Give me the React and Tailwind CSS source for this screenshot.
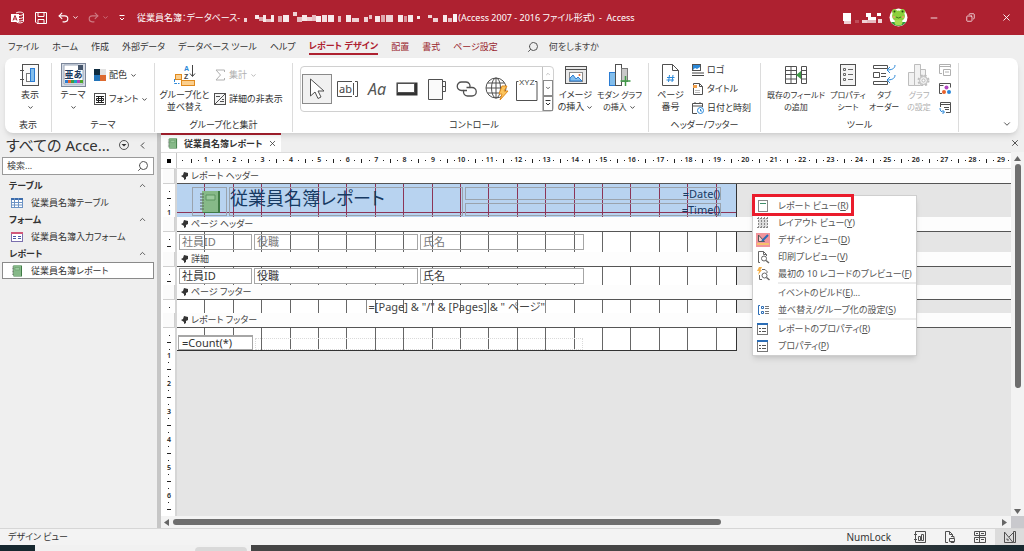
import React, { useState } from 'react';
import { ChevronDown, ChevronUp, ChevronLeft, Search, X, Minus, Copy, Undo2, Redo2 } from 'lucide-react';

const CM = 28.4;

const tabs = [
  { label: 'ファイル' },
  { label: 'ホーム' },
  { label: '作成' },
  { label: '外部データ' },
  { label: 'データベース ツール' },
  { label: 'ヘルプ' },
  { label: 'レポート デザイン', active: true },
  { label: '配置', contextual: true },
  { label: '書式', contextual: true },
  { label: 'ページ設定', contextual: true },
];

const navGroups = [
  { title: 'テーブル', items: [{ label: '従業員名簿テーブル', icon: 'table' }] },
  { title: 'フォーム', items: [{ label: '従業員名簿入力フォーム', icon: 'form' }] },
  { title: 'レポート', items: [{ label: '従業員名簿レポート', icon: 'report' }] },
];

const menuItems = [
  { label: 'レポート ビュー', mnemonic: 'R', icon: 'reportView' },
  { label: 'レイアウト ビュー', mnemonic: 'Y', icon: 'layout' },
  { label: 'デザイン ビュー', mnemonic: 'D', icon: 'design' },
  { label: '印刷プレビュー', mnemonic: 'V', icon: 'preview' },
  { label: '最初の 10 レコードのプレビュー', mnemonic: 'F', icon: 'quick' },
  { separator: true },
  { label: 'イベントのビルド', mnemonic: 'E', tail: '...' },
  { label: '並べ替え/グループ化の設定', mnemonic: 'S', icon: 'sort' },
  { separator: true },
  { label: 'レポートのプロパティ', mnemonic: 'R', icon: 'props' },
  { label: 'プロパティ', mnemonic: 'P', icon: 'props' },
];

/* ---------- Icons ---------- */

const Svg = ({ w, h, children, stroke = '#505050' }) => (
  <svg width={w} height={h} viewBox={`0 0 ${w} ${h}`} fill="none" stroke={stroke} className="block shrink-0">
    {children}
  </svg>
);

const ReportViewIcon = () => (
  <Svg w={20} h={22}>
    <rect x="2.5" y="0.5" width="16" height="21" fill="#fafafa" />
    <path d="M0 6.5h4M0 15.5h4" />
    <rect x="6.5" y="9.5" width="4" height="8" fill="#fff" stroke="#777" />
    <rect x="10.5" y="4.5" width="4" height="13" fill="#83beec" stroke="#2b7cd3" />
  </Svg>
);

const ThemeIcon = () => (
  <svg width="25" height="24" viewBox="0 0 25 24" className="block">
    <rect x="0.5" y="0.5" width="24" height="23" fill="#d5dbe5" stroke="#7c879a" />
    <path d="M3 2h14l5 5v14H3z" fill="#fff" stroke="#9aa6b8" />
    <path d="M17 2v5h5V2z" fill="#44546a" />
    <text x="12.5" y="15" fontSize="9" fontWeight="700" textAnchor="middle" fill="#1c3a5e">亜あ</text>
    <rect x="4" y="17" width="3" height="3" fill="#2b7cd3" />
    <rect x="7" y="17" width="3" height="3" fill="#e8622c" />
    <rect x="10" y="17" width="3" height="3" fill="#3f9b46" />
    <rect x="13" y="17" width="3" height="3" fill="#1aa5c8" />
    <rect x="16" y="17" width="3" height="3" fill="#b146c2" />
    <rect x="19" y="17" width="3" height="3" fill="#4ea72e" />
  </svg>
);

const ColorsIcon = () => (
  <Svg w={12} h={12} stroke="none">
    <rect width="6" height="6" fill="#0f2c40" />
    <rect x="6" width="6" height="6" fill="#e2e2e2" />
    <rect y="6" width="6" height="6" fill="#2173b8" />
    <rect x="6" y="6" width="6" height="6" fill="#dd6a30" />
  </Svg>
);

const FontsIcon = () => (
  <Svg w={12} h={12}>
    <rect x="0.5" y="0.5" width="11" height="11" fill="#fff" />
    <path d="M2 3.5h8M2 9.5h8M4.5 3.5v6M7.5 3.5v6M2.5 5.5h7v2h-7z" stroke="#222" />
  </Svg>
);

const GroupSortIcon = () => (
  <Svg w={22} h={22}>
    <g className="font-['Liberation_Sans',sans-serif]" fontSize="7" fontWeight="700" stroke="none">
      <text x="10" y="7" fill="#2b88d8">A</text>
      <text x="10" y="15" fill="#444">Z</text>
    </g>
    <path d="M18.5 1v11M16 9.5l2.500 3 2.500-3" stroke="#444" />
    <rect x="1.5" y="10.5" width="6" height="5" fill="#fbcf8e" stroke="#e08a1e" />
    <rect x="7.5" y="16.5" width="13" height="5" fill="#fbcf8e" stroke="#e08a1e" />
    <path d="M0.5 15v4.500h5" stroke="#2b88d8" strokeDasharray="3 1" />
  </Svg>
);

const SigmaIcon = () => (
  <Svg w={12} h={12} stroke="#b0b0b0">
    <path d="M10.5 3V1H2l4.500 5L2 11h8.500V9" />
  </Svg>
);

const HideDetailIcon = () => (
  <Svg w={12} h={12}>
    <rect x="0.5" y="0.5" width="11" height="11" fill="#f4f4f4" />
    <path d="M1 11L11 1M6 8.5h4M8 6.5h2M2 3.5h4" />
  </Svg>
);

const PointerIcon = () => (
  <Svg w={20} h={24}>
    <path d="M3.5 2v17l4.500-4 3 6.500 3-1.500-3-6h6z" fill="#fff" />
  </Svg>
);

const TextBoxIcon = () => (
  <Svg w={21} h={16}>
    <path d="M15 0.5H0.5v15H15M18 0.5h2.500v15H18" />
    <text x="2" y="12" fontSize="11" fill="#444" stroke="none">ab</text>
    <path d="M16.5 2v12" />
  </Svg>
);

const ButtonIcon = () => (
  <Svg w={22} h={14}>
    <rect x="1" y="1" width="20" height="12" fill="#333" stroke="#333" />
    <rect x="1.5" y="1.5" width="17" height="9" fill="#fff" />
  </Svg>
);

const TabControlIcon = () => (
  <Svg w={18} h={21}>
    <path d="M0.5 0.5h14v20H0.5zM14.5 2.5h3v5h-3M14.5 7.5h3v5h-3" fill="#fafafa" />
  </Svg>
);

const LinkIcon = () => (
  <Svg w={22} h={16}>
    <path d="M11 9.5H5.5a4 4 0 0 1 0-8.500H10a4 4 0 0 1 3.500 6" strokeWidth="1.3" />
    <path d="M10.5 6.5H16a4 4 0 0 1 0 8.500h-4.500a4 4 0 0 1-3.500-6" strokeWidth="1.3" />
  </Svg>
);

const GlobeIcon = () => (
  <Svg w={24} h={24}>
    <circle cx="11" cy="11" r="10" />
    <ellipse cx="11" cy="11" rx="4.5" ry="10" />
    <path d="M1 11h20M2.5 6h17M2.5 16h17M11 1v20" />
    <path d="M17 9h5l-3 5h4l-8 9 2-6h-3z" fill="#fbc45c" stroke="#e08a1e" />
  </Svg>
);

const OptionGroupIcon = () => (
  <Svg w={22} h={24}>
    <path d="M2.500 4.500H0.500v19h20.500v-19h-2" />
    <text x="3" y="8" fontSize="8" fill="#444" stroke="none" className="font-['Liberation_Sans',sans-serif]">XYZ</text>
  </Svg>
);

const ImageIcon = () => (
  <Svg w={22} h={18}>
    <rect x="0.5" y="0.5" width="21" height="17" fill="#e9e9e9" />
    <path d="M1 3.5h20" />
    <rect x="4.5" y="6.5" width="13" height="9" fill="#fff" stroke="#8a8a8a" />
    <path d="M5 15v-3l3-3 3 4 2-2 4 4z" fill="#83beec" stroke="#2b7cd3" />
    <circle cx="14.5" cy="9" r="1" fill="#e8622c" stroke="none" />
  </Svg>
);

const ChartIcon = () => (
  <Svg w={22} h={22}>
    <rect x="0.5" y="8.5" width="6" height="13" fill="#83beec" stroke="#2b7cd3" />
    <rect x="6.5" y="0.5" width="6" height="21" fill="#fff" />
    <rect x="12.5" y="4.5" width="6" height="13" fill="#c8c8c8" stroke="#777" />
    <path d="M16.5 12v10M11.5 17h10" stroke="#3f9b46" strokeWidth="1.5" />
  </Svg>
);

const PageNumberIcon = () => (
  <Svg w={17} h={22}>
    <path d="M0.5 0.5h10l6 6v15h-16zM10.5 0.5v6h6" fill="#fff" />
    <path d="M7.5 11l-1 7M11 11l-1 7M5 13.5h7.500M4.5 16h7.500" stroke="#2b88d8" />
  </Svg>
);

const LogoIcon = () => (
  <Svg w={12} h={12}>
    <rect x="0.5" y="0.5" width="8" height="6" fill="#2b88d8" />
    <path d="M1 6l2-2 2 1 3-2v3z" fill="#fff" stroke="none" />
    <path d="M0 9h12M0 11.5h12" stroke="#444" />
  </Svg>
);

const TitleIcon = () => (
  <Svg w={12} h={12}>
    <path d="M1.5 0.5h6l3 3v8h-9zM7.5 0.5v3h3" fill="#fff" />
    <rect x="1" y="2" width="4" height="3" fill="#f2a04a" stroke="none" />
    <path d="M3 7.5h5M3 9.5h5" stroke="#bbb" />
  </Svg>
);

const DateTimeIcon = () => (
  <Svg w={12} h={12}>
    <path d="M5 11.5H0.5v-10h10V5M0.5 4h10M3 0v2M8 0v2" />
    <circle cx="8.5" cy="8.5" r="3" fill="#fff" stroke="#2b88d8" />
    <path d="M8.5 7v2H10" stroke="#2b88d8" />
  </Svg>
);

const FieldsIcon = () => (
  <Svg w={22} h={18}>
    <path d="M0.5 0.5h11v17H0.5zM0.5 4.5h11M0.5 8.5h11M0.5 13h11M6 0.5v17M16.5 0.5h5v17h-5zM16.5 4.5h5M16.5 8.5h5M16.5 13h5" />
    <path d="M11 9l5-4v8z" fill="#3f9b46" stroke="none" />
  </Svg>
);

const PropertySheetIcon = () => (
  <Svg w={16} h={22}>
    <rect x="0.5" y="0.5" width="15" height="21" fill="#f4f4f4" />
    <path d="M3.5 4.5h2v2h-2zM3.5 9.5h2v2h-2zM3.5 14.5h2v2h-2zM8 5.5h5M8 10.5h5M8 15.5h5" stroke="#666" />
  </Svg>
);

const TabOrderIcon = () => (
  <Svg w={23} h={22}>
    <path d="M0.500 1.500h14v3h-14zM0.500 8.500h6v5h-6zM0.500 17.500h14v3h-14zM8 9.500h5M8 12.500h5" />
    <path d="M22 1c0 4-4 5-8 5M17 3l-3 3 3 3M22 11c0 4-4 5-8 5M17 13l-3 3 3 3" stroke="#2b88d8" />
  </Svg>
);

const ChartSettingsIcon = () => (
  <Svg w={22} h={22} stroke="#bdbdbd">
    <path d="M0.5 8.5h6v13h-6zM6.5 0.5h6v21h-6zM12.5 5.5h5v6h-5z" fill="#f2f2f2" />
    <circle cx="15.5" cy="16.5" r="5" fill="#eee" strokeWidth="2" strokeDasharray="2 2" />
    <circle cx="15.5" cy="16.5" r="4" fill="#eee" />
    <circle cx="15.5" cy="16.5" r="1.5" fill="#fff" />
  </Svg>
);

const SubformIcon = () => (
  <Svg w={12} h={12} stroke="#b0b0b0">
    <path d="M3 9.5H0.5v-9h11v3M0.5 2.5h11M4.5 5.5h7v6h-7zM6 8h4" />
  </Svg>
);

const MacroIcon = () => (
  <Svg w={12} h={12}>
    <path d="M3 10.5H0.5v-10h11v4M0.5 2.5h4" />
    <circle cx="7.5" cy="4.5" r="2" fill="#b146c2" stroke="none" />
    <circle cx="5" cy="9" r="2" fill="#e8622c" stroke="none" />
    <circle cx="10" cy="9" r="2" fill="#2b88d8" stroke="none" />
  </Svg>
);

const ConvertIcon = () => (
  <Svg w={12} h={12}>
    <path d="M1.5 5V0.5h10v10H7M1.5 2.5h10M5 5.5h5M6 7.5h4" />
    <path d="M1 6c0 3 1 4 4 4M3.5 8L5.5 10l-2 2" stroke="#2b88d8" />
  </Svg>
);

const NotebookIcon = ({ size }) => (
  <svg width={size} height={size} viewBox="0 0 24 24" className="block shrink-0">
    <path d="M5 1h17v22H5z" fill="#3f7a45" />
    <path d="M4 1h16v21H4z" fill="#86b988" />
    <path d="M8 5h9v5H8z" fill="#9cca9e" stroke="#5c9560" />
    <path d="M2 4h4M2 7h4M2 10h4M2 13h4M2 16h4M2 19h4" stroke="#56615a" />
  </svg>
);

const TableIcon = () => (
  <Svg w={12} h={10} stroke="#6c93c4">
    <rect x="0.5" y="0.5" width="11" height="9" fill="#fff" />
    <path d="M0 1h12" stroke="#3d6cab" strokeWidth="2" />
    <path d="M0 4.5h12M0 7h12M3.5 0v10M7.5 0v10" />
  </Svg>
);

const FormIcon = () => (
  <Svg w={12} h={10} stroke="#7a6fae">
    <rect x="0.5" y="0.5" width="11" height="9" fill="#fff" />
    <path d="M0 1h12" stroke="#d1587a" strokeWidth="2" />
    <path d="M2 4.5h3M2 6.5h3M7 4.5h3M7 6.5h3" stroke="#4a5aa8" />
  </Svg>
);

const navIcons = { table: <TableIcon />, form: <FormIcon />, report: <NotebookIcon size={12} /> };

const menuIcons = {
  reportView: (
    <Svg w={14} h={14} stroke="#888">
      <rect x="2.5" y="1.5" width="9" height="11" fill="#fff" />
      <path d="M4 4.5h6" stroke="#3f8f6a" />
    </Svg>
  ),
  layout: (
    <Svg w={14} h={14} stroke="#888">
      <rect x="2.5" y="2.5" width="9" height="9" fill="#dcdcdc" stroke="none" />
      <path d="M2.5 1v12M5.5 1v12M8.500 1v12M11.5 1v12M1 2.5h12M1 11.5h12" strokeDasharray="2 1" />
    </Svg>
  ),
  design: (
    <Svg w={14} h={14} stroke="none">
      <rect width="14" height="14" fill="#f1959b" />
      <path d="M2.5 2v6.500h6z" stroke="#555" fill="#f1d0d0" />
      <path d="M6 8l6-6" stroke="#2b6cb5" strokeWidth="2" />
      <rect x="1" y="10" width="12" height="2" fill="#f7c26b" />
    </Svg>
  ),
  preview: (
    <Svg w={14} h={14} stroke="#666">
      <path d="M4 12.5H2.5v-11h5l3 3V6M7.5 1.5v3h3" fill="#fff" />
      <circle cx="8" cy="8.5" r="2.5" fill="#fff" />
      <path d="M10 10.5l3 2.500" strokeWidth="1.5" />
    </Svg>
  ),
  quick: (
    <Svg w={14} h={14} stroke="#666">
      <path d="M6 12.5H3.5V8M6 2.5h3l2 2V6" />
      <path d="M3 0h3L4.5 3H6L2 8l1-4H1z" fill="#f5b24c" stroke="none" />
      <circle cx="8.5" cy="8.5" r="2.5" fill="#fff" />
      <path d="M10.5 10.5l3 2.500" strokeWidth="1.5" />
    </Svg>
  ),
  sort: (
    <Svg w={14} h={14} stroke="#2b6cb5">
      <path d="M4 2.5H2.5v9H4M5.500 3.500h2v2h-2zM5.500 8.500h2v2h-2z" />
      <path d="M9 3.5h4M9 5.5h4M9 8.5h4M9 10.5h4" stroke="#777" />
    </Svg>
  ),
  props: (
    <Svg w={14} h={14} stroke="#777">
      <rect x="1.5" y="1.5" width="10" height="11" fill="#fff" />
      <path d="M1 2h11" stroke="#2b6cb5" strokeWidth="2" />
      <path d="M3 6.500h2M3 9.5h2M6 6.500h4M6 9.5h4" stroke="#555" />
    </Svg>
  ),
};

/* ---------- Title bar ---------- */

const MaskedText = ({ blocks, width }) => (
  <svg width={width} height="12" viewBox={`0 0 ${width} 12`} fill="#fff" className="block shrink-0">
    {blocks.map(([x, y, w, h, o]) => (
      <rect key={x} x={x} y={y} width={w} height={h} opacity={o} />
    ))}
  </svg>
);

const pathBlocks = [
  [4, 6, 3, 4, 0.8], [15, 3, 4, 4, 0.9], [19, 5, 4, 4, 0.6], [23, 3, 3, 7, 0.9], [26, 7, 5, 3, 0.7],
  [31, 3, 3, 7, 0.9], [38, 4, 4, 6, 0.6], [43, 3, 6, 7, 0.9], [53, 0, 4, 4, 0.8], [57, 5, 5, 5, 0.7],
  [62, 3, 5, 6, 0.9], [67, 5, 5, 4, 0.8], [72, 3, 4, 6, 0.7], [76, 4, 5, 6, 0.95], [82, 3, 5, 7, 0.85],
  [88, 3, 6, 7, 0.9], [98, 4, 3, 6, 0.7], [106, 3, 5, 7, 0.9], [112, 6, 7, 4, 0.8], [124, 5, 4, 5, 0.8],
  [129, 3, 3, 4, 0.7], [135, 4, 5, 6, 0.9], [141, 3, 4, 7, 0.6], [146, 3, 7, 7, 0.8], [158, 3, 5, 7, 0.9],
  [164, 4, 3, 6, 0.5], [168, 3, 5, 7, 0.9], [177, 4, 3, 3, 0.9], [188, 3, 4, 3, 0.8], [193, 6, 5, 4, 0.8],
  [203, 3, 4, 7, 0.9], [208, 6, 4, 4, 0.7], [213, 2, 4, 8, 0.95],
];

const userBlocks = [
  [0, 1, 8, 8, 1], [1, 9, 7, 3, 0.8], [12, 8, 4, 3, 0.2], [19, 8, 5, 3, 0.8], [23, 1, 5, 4, 1], [25, 5, 8, 3, 1], [24, 8, 9, 3, 0.7], [34, 1, 4, 3, 1], [35, 7, 4, 4, 0.8],
];

const Avatar = () => (
  <svg width="19" height="19" viewBox="0 0 19 19" className="block shrink-0">
    <circle cx="9.5" cy="9.5" r="9" fill="#fff" />
    <path d="M2 14a9 9 0 0 0 15 0z" fill="#2f9a3b" />
    <ellipse cx="9.5" cy="8" rx="6.5" ry="5.5" fill="#8ccf3c" />
    <circle cx="5.5" cy="3.5" r="2.5" fill="#8ccf3c" />
    <circle cx="13.5" cy="3.5" r="2.5" fill="#8ccf3c" />
    <ellipse cx="9.5" cy="14.5" rx="4" ry="3" fill="#a6de52" />
    <circle cx="5.5" cy="3.5" r="1" fill="#234d12" />
    <circle cx="13.5" cy="3.5" r="1" fill="#234d12" />
    <path d="M7 9q2.500 2 5 0" stroke="#3c7a1a" fill="none" />
    <circle cx="5" cy="9" r="1" fill="#f19a6b" />
    <circle cx="14" cy="9" r="1" fill="#f19a6b" />
  </svg>
);

const TitleBar = () => (
  <header className="h-[35px] shrink-0 flex items-center pl-[11px] bg-[#ae2130] text-white text-[9px]">
    <svg width="13" height="13" viewBox="0 0 13 13" fill="none" stroke="#fff" className="block shrink-0">
      <path d="M5 2c2-1.500 7-1 7.500 0.500v8c-0.500 1.500-5 2-7 0.500M8 4.5c2 0 4-0.500 4.500-1.500M8 7.5c2 0 4-0.500 4.500-1.500M8 10c2 0 4-0.500 4.500-1.500" />
      <rect x="0" y="3" width="8" height="8" fill="#fff" stroke="none" />
      <path d="M2 9.5L4 4.5l2 5M2.7 8h2.600" stroke="#ae2130" />
    </svg>
    <button type="button" aria-label="上書き保存" className="ml-[11px]">
      <svg width="12" height="12" viewBox="0 0 12 12" fill="none" stroke="#fff" className="block">
        <path d="M0.5 0.5h11v11H2L0.5 10zM3 0.5v4h6v-4M3 11.5V7.5h6v4" />
      </svg>
    </button>
    <button type="button" aria-label="元に戻す" className="ml-2.5 flex items-center gap-0.5">
      <Undo2 size={13} strokeWidth={2} />
      <ChevronDown size={7} strokeWidth={3} />
    </button>
    <button type="button" aria-label="やり直し" className="ml-2 flex items-center gap-0.5 opacity-40">
      <Redo2 size={13} strokeWidth={2} />
      <ChevronDown size={7} strokeWidth={3} />
    </button>
    <button type="button" aria-label="クイック アクセス" className="ml-2.5">
      <svg width="6" height="6" viewBox="0 0 6 6" fill="none" stroke="#fff" className="block">
        <path d="M0.5 0.5h5M1 3l2 2 2-2" />
      </svg>
    </button>
    <div className="ml-3 flex items-center whitespace-nowrap">
      <span>従業員名簿：データベース-</span>
      <MaskedText blocks={pathBlocks} width={218} />
      <span className="whitespace-pre">(Access 2007 - 2016 ファイル形式)  -  Access</span>
    </div>
    <div className="ml-auto flex items-center">
      <MaskedText blocks={userBlocks} width={40} />
      <span className="ml-1.5"><Avatar /></span>
      <button type="button" aria-label="最小化" className="w-9 ml-2 flex justify-center"><Minus size={10} strokeWidth={2} /></button>
      <button type="button" aria-label="元のサイズ" className="w-9 flex justify-center"><Copy size={9} strokeWidth={2} className="-scale-x-100" /></button>
      <button type="button" aria-label="閉じる" className="w-9 flex justify-center"><X size={11} strokeWidth={2} /></button>
    </div>
  </header>
);

/* ---------- Ribbon ---------- */

const TabStrip = () => (
  <nav className="h-[23px] shrink-0 flex items-center gap-[13px] pl-2 text-[9px] text-[#333] whitespace-nowrap">
    {tabs.map(tab => (
      <button
        key={tab.label}
        type="button"
        className={
          tab.active
            ? 'h-4 border-b-2 border-[#ae2130] text-[#ae2130] font-bold leading-[14px]'
            : tab.contextual
              ? 'h-4 text-[#9a1f2e] leading-[14px]'
              : 'h-4 leading-[14px]'
        }
      >
        {tab.label}
      </button>
    ))}
    <label className="ml-4 flex items-center gap-2.5">
      <Search size={12} strokeWidth={2} className="-scale-x-100 text-[#555]" />
      <input aria-label="何をしますか" placeholder="何をしますか" className="w-24 bg-transparent outline-none placeholder:text-[#444]" />
    </label>
  </nav>
);

const Group = ({ label, className, children }) => (
  <section className={`flex flex-col shrink-0 mb-px border-r border-[#dcdcdc] ${className}`}>
    <div className="flex-1 flex items-start">{children}</div>
    <h2 className="h-[14px] leading-[14px] text-center">{label}</h2>
  </section>
);

const BigButton = ({ icon, lines, arrow, disabled, className }) => (
  <button
    type="button"
    disabled={disabled}
    className={`flex flex-col items-center shrink-0 whitespace-nowrap leading-[12px] ${disabled ? 'text-[#b0b0b0]' : ''} ${className}`}
  >
    <span className="h-6 flex items-center justify-center">{icon}</span>
    <span className="mt-0.5">{lines[0]}</span>
    <span className="h-3 flex items-center gap-0.5">
      {lines[1]}
      {arrow && <ChevronDown size={7} strokeWidth={3} />}
    </span>
  </button>
);

const SmallButton = ({ icon, label, name, arrow, disabled }) => (
  <button
    type="button"
    disabled={disabled}
    aria-label={name}
    className={`h-3 flex items-center gap-[3px] whitespace-nowrap ${disabled ? 'text-[#b0b0b0]' : ''}`}
  >
    {icon}
    {label}
    {arrow && <ChevronDown size={7} strokeWidth={3} />}
  </button>
);

const galleryItems = [
  { name: '選択', icon: <PointerIcon /> },
  { name: 'テキスト ボックス', icon: <TextBoxIcon /> },
  { name: 'ラベル', icon: <span className="text-[16px] italic text-[#555]">Aa</span> },
  { name: 'ボタン', icon: <ButtonIcon /> },
  { name: 'タブ コントロール', icon: <TabControlIcon /> },
  { name: 'リンク', icon: <LinkIcon /> },
  { name: 'ナビゲーション', icon: <GlobeIcon /> },
  { name: 'オプション グループ', icon: <OptionGroupIcon /> },
];

const Gallery = () => {
  const [selected, setSelected] = useState('選択');

  return (
    <div className="mt-[3px] h-[46px] flex border border-[#d0d0d0] rounded">
      <div className="flex items-center pl-px">
        {galleryItems.map(item => (
          <button
            key={item.name}
            type="button"
            aria-label={item.name}
            onClick={() => setSelected(item.name)}
            className={`w-[30px] h-[30px] flex items-center justify-center ${selected === item.name ? 'border border-[#8a8a8a] bg-[#f1f1f1]' : ''}`}
          >
            {item.icon}
          </button>
        ))}
      </div>
      <div className="w-[11px] flex flex-col border-l border-[#c0c0c0]">
        <button type="button" aria-label="上へ" className="flex-1 flex items-center justify-center text-[#b0b0b0]"><ChevronUp size={6} strokeWidth={3} /></button>
        <button type="button" aria-label="下へ" className="flex-1 flex items-center justify-center border border-[#8a8a8a]"><ChevronDown size={6} strokeWidth={3} /></button>
        <button type="button" aria-label="その他" className="flex-1 flex items-center justify-center border border-[#8a8a8a]">
          <svg width="6" height="6" viewBox="0 0 6 6" fill="none" stroke="#333"><path d="M0.5 0.5h5M1 3l2 2 2-2" /></svg>
        </button>
      </div>
    </div>
  );
};

const Ribbon = () => (
  <div className="h-[75px] shrink-0 ml-[5px] mr-1.5 flex rounded-lg bg-white shadow-md pt-[5px] text-[9px] text-[#333] relative z-10">
    <Group label="表示" className="w-[47px]">
      <BigButton icon={<ReportViewIcon />} lines={['表示', '']} arrow className="w-[50px]" />
    </Group>
    <Group label="テーマ" className="w-[103px]">
      <BigButton icon={<ThemeIcon />} lines={['テーマ', '']} arrow className="w-[42px]" />
      <div className="flex flex-col gap-3 pt-1.5">
        <SmallButton icon={<ColorsIcon />} label="配色" arrow />
        <SmallButton icon={<FontsIcon />} label="フォント" arrow />
      </div>
    </Group>
    <Group label="グループ化と集計" className="w-[138px]">
      <BigButton icon={<GroupSortIcon />} lines={['グループ化と', '並べ替え']} className="w-[59px]" />
      <div className="flex flex-col gap-3 pt-1.5">
        <SmallButton icon={<SigmaIcon />} label="集計" arrow disabled />
        <SmallButton icon={<HideDetailIcon />} label="詳細の非表示" />
      </div>
    </Group>
    <Group label="コントロール" className="w-[356px] pl-[7px]">
      <Gallery />
      <BigButton icon={<ImageIcon />} lines={['イメージ', 'の挿入']} arrow className="w-[43px]" />
      <BigButton icon={<ChartIcon />} lines={['モダン グラフ', 'の挿入']} arrow className="w-[45px] text-[8px]" />
    </Group>
    <Group label="ヘッダー/フッター" className="w-[112px]">
      <BigButton icon={<PageNumberIcon />} lines={['ページ', '番号']} className="w-[43px]" />
      <div className="flex flex-col gap-[7px] pt-px">
        <SmallButton icon={<LogoIcon />} label="ロゴ" />
        <SmallButton icon={<TitleIcon />} label="タイトル" />
        <SmallButton icon={<DateTimeIcon />} label="日付と時刻" />
      </div>
    </Group>
    <Group label="ツール" className="w-[198px]">
      <BigButton icon={<FieldsIcon />} lines={['既存のフィールド', 'の追加']} className="w-[70px] text-[8px]" />
      <BigButton icon={<PropertySheetIcon />} lines={['プロパティ', 'シート']} className="w-[34px] text-[8px]" />
      <BigButton icon={<TabOrderIcon />} lines={['タブ', 'オーダー']} className="w-[38px] text-[8px]" />
      <BigButton icon={<ChartSettingsIcon />} lines={['グラフ', 'の設定']} disabled className="w-[32px] text-[8px]" />
      <div className="flex flex-col gap-[7px] pt-px pl-1">
        <SmallButton icon={<SubformIcon />} name="サブフォーム" disabled />
        <SmallButton icon={<MacroIcon />} name="コードの表示" />
        <SmallButton icon={<ConvertIcon />} name="マクロの変換" />
      </div>
    </Group>
    <button type="button" aria-label="リボンを折りたたむ" className="ml-auto mr-1.5 mb-1 self-end"><ChevronDown size={10} strokeWidth={2} /></button>
  </div>
);

/* ---------- Navigation pane ---------- */

const NavPane = () => (
  <aside className="w-[161px] shrink-0 border-r-4 border-[#c6c6c6] bg-[#efefef] text-[9px] text-[#333]">
    <div className="h-6 flex items-center pl-1.5">
      <h1 className="w-[110px] text-[15px] whitespace-nowrap">すべての Acce...</h1>
      <button type="button" aria-label="表示の切り替え" className="ml-[3px]">
        <svg width="10" height="10" viewBox="0 0 10 10" fill="none" stroke="#555" className="block">
          <circle cx="5" cy="5" r="4.5" />
          <path d="M2.5 4h5L5 6.5z" fill="#333" stroke="none" />
        </svg>
      </button>
      <button type="button" aria-label="ナビゲーションを閉じる" className="ml-2"><ChevronLeft size={11} strokeWidth={2} /></button>
    </div>
    <label className="ml-0.5 mr-[3px] h-[18px] flex items-center border border-[#9a9a9a] bg-white px-1">
      <input aria-label="検索" placeholder="検索..." className="min-w-0 flex-1 outline-none placeholder:text-[#444]" />
      <Search size={12} strokeWidth={2} className="-scale-x-100 text-[#555]" />
    </label>
    <div className="mt-0.5">
      {navGroups.map(group => (
        <div key={group.title}>
          <button type="button" className="w-full h-[17px] flex items-center justify-between pl-[9px] pr-[10px] font-bold">
            {group.title}
            <ChevronUp size={9} strokeWidth={2} />
          </button>
          {group.items.map(item => (
            <a
              key={item.label}
              href="#report"
              className={`h-[17px] flex items-center gap-2 ml-0.5 mr-[3px] pl-2 border whitespace-nowrap ${item.icon === 'report' ? 'border-[#8a8a8a] bg-white' : 'border-transparent'}`}
            >
              {navIcons[item.icon]}
              {item.label}
            </a>
          ))}
        </div>
      ))}
    </div>
  </aside>
);

/* ---------- Report designer ---------- */

const Dot = () => <i className="block w-px h-px bg-[#222]" />;

const HorizontalRuler = () => (
  <div className="h-[17px] shrink-0 flex items-center bg-white border-y border-[#dcdcdc] text-[7px] font-semibold text-[#222]">
    <button type="button" aria-label="レポートの選択" className="w-4 h-full shrink-0 flex items-center justify-center border-r border-[#c6c6c6]">
      <span className="block w-1 h-1 bg-black" />
    </button>
    <div className="flex-1 flex items-center overflow-hidden">
      <span className="w-[11px] shrink-0 flex justify-center"><Dot /></span>
      <div className="grid w-[852px] shrink-0 grid-cols-[repeat(120,1fr)] justify-items-center items-center">
        {Array.from({ length: 29 }, (_, i) => (
          <React.Fragment key={i}>
            <i className="block w-px h-1 bg-[#222]" />
            <Dot />
            <span className="w-0 flex justify-center">{i + 1}</span>
            <Dot />
          </React.Fragment>
        ))}
      </div>
    </div>
  </div>
);

// left-hand ruler, one step per quarter centimetre
const VerticalRuler = ({ steps }) => (
  <div className="h-full overflow-hidden flex flex-col items-center pt-1 text-[7px] font-semibold text-[#222]">
    {Array.from({ length: steps }, (_, i) => (
      <span key={i} className="h-[7px] shrink-0 flex items-center justify-center leading-[7px]">
        {i % 4 === 3 ? (i + 1) / 4 : i % 4 === 1 ? <i className="block w-1 h-px bg-[#222]" /> : <Dot />}
      </span>
    ))}
  </div>
);

const GridLines = ({ height, color, horizontal }) => (
  <svg width="560" height={height} className="block absolute left-0 top-0" shapeRendering="crispEdges">
    {Array.from({ length: 19 }, (_, i) => (
      <rect key={i} x={Math.round((i + 1) * CM) - 1} y="0" width="1" height={height} fill={color} />
    ))}
    {horizontal && <rect x="0" y="28" width="560" height="1" fill={color} />}
    <rect x="559" y="0" width="1" height={height} fill="#333" />
  </svg>
);

const Field = ({ children, className }) => (
  <div className={`absolute border whitespace-nowrap ${className}`}>{children}</div>
);

const Section = ({ title, height, steps, tinted, children }) => (
  <div className="flex">
    <div className="w-4 shrink-0 bg-white border-r-2 border-[#d6d6d6] pl-0.5">
      <div className="h-[15px] border-r border-b border-[#d0d0d0] bg-[#fbfbfb]" />
      <div style={{ height }}><VerticalRuler steps={steps} /></div>
    </div>
    <div className="flex-1 min-w-0">
      <button type="button" className="w-full h-[15px] flex items-center gap-[3px] pl-1 bg-[#fdfdfd] border-b border-[#555] text-[9px] text-[#444]">
        <svg width="7" height="8" viewBox="0 0 7 8" fill="#333" className="block shrink-0">
          <path d="M3 0l4 1v3L5 5v2L3 8V6L0 4l2-1z" />
        </svg>
        {title}
      </button>
      <div className="relative bg-[#e5e5e5]" style={{ height }}>
        <div className={`relative w-[560px] h-full ${tinted ? 'bg-[#b8d3f0]' : 'bg-white'}`}>
          <GridLines height={height} color={tinted ? '#8c3557' : '#666'} horizontal={tinted} />
          {children}
        </div>
      </div>
    </div>
  </div>
);

const ContextMenu = () => (
  <div role="menu" className="absolute left-[591px] top-[62px] z-20 w-[165px] py-px bg-white border border-[#cfcfcf] shadow-md text-[9px] text-[#555]">
    {menuItems.map((item, i) =>
      item.separator ? (
        <div key={i} className="h-0.5 ml-[25px] bg-[#ececec]" />
      ) : (
        <button key={i} type="button" role="menuitem" className="w-full h-[17px] flex items-center pl-[3px] whitespace-nowrap">
          <span className="w-[22px] shrink-0">{menuIcons[item.icon]}</span>
          {item.label}(<u>{item.mnemonic}</u>){item.tail}
        </button>
      )
    )}
    <div className="absolute -left-px -top-0.5 w-[102px] h-[22px] border-[3px] border-[#ea1c2c]" />
  </div>
);

const Designer = () => (
  <main id="report" className="relative flex-1 min-w-0 flex flex-col bg-[#efefef]">
    <div className="h-[19px] shrink-0 flex items-center justify-between pr-1 text-[#333]">
      <div className="w-[120px] h-full flex items-center gap-1.5 pl-1.5 bg-white border-t-2 border-[#ae2130] text-[9px] font-bold whitespace-nowrap">
        <NotebookIcon size={11} />
        従業員名簿レポート
        <button type="button" aria-label="タブを閉じる" className="ml-auto mr-1"><X size={9} strokeWidth={2} /></button>
      </div>
      <button type="button" aria-label="閉じる"><X size={10} strokeWidth={2} /></button>
    </div>
    <div className="flex-1 min-h-0 flex">
      <div className="flex-1 min-w-0 flex flex-col overflow-hidden bg-[#e5e5e5]">
        <HorizontalRuler />
        <Section title="レポート ヘッダー" height={33} steps={4} tinted>
          <Field className="left-[15px] top-[3px] w-[35px] h-[29px] border-[#9aa3ad] pt-0.5 pl-[5px]"><NotebookIcon size={24} /></Field>
          <Field className="left-[52px] top-[3px] w-[234px] h-[29px] border-[#9aa3ad] text-[18px] leading-[20px] text-[#173a63]">従業員名簿レポート</Field>
          <Field className="left-[288px] top-[3px] w-[256px] h-[13px] border-[#9aa3ad] text-right text-[11px] leading-[12px] text-[#173a63]">=Date()</Field>
          <Field className="left-[288px] top-[19px] w-[256px] h-[13px] border-[#9aa3ad] text-right text-[11px] leading-[12px] text-[#173a63]">=Time()</Field>
        </Section>
        <Section title="ページ ヘッダー" height={20} steps={2}>
          <Field className="left-[2px] top-[2px] w-[73px] h-4 border-[#a6a6a6] pl-0.5 text-[11px] leading-[13px] text-[#777]">社員ID</Field>
          <Field className="left-[77px] top-[2px] w-[164px] h-4 border-[#a6a6a6] pl-0.5 text-[11px] leading-[13px] text-[#777]">役職</Field>
          <Field className="left-[243px] top-[2px] w-[164px] h-4 border-[#a6a6a6] pl-0.5 text-[11px] leading-[13px] text-[#777]">氏名</Field>
        </Section>
        <Section title="詳細" height={18} steps={2}>
          <Field className="left-[2px] top-[1px] w-[73px] h-4 border-[#a6a6a6] pl-0.5 bg-white text-[11px] leading-[13px] text-[#333]">社員ID</Field>
          <Field className="left-[77px] top-[1px] w-[164px] h-4 border-[#a6a6a6] pl-0.5 bg-white text-[11px] leading-[13px] text-[#333]">役職</Field>
          <Field className="left-[243px] top-[1px] w-[164px] h-4 border-[#a6a6a6] pl-0.5 bg-white text-[11px] leading-[13px] text-[#333]">氏名</Field>
        </Section>
        <Section title="ページ フッター" height={13} steps={1}>
          <Field className="left-[189px] top-0 w-[180px] h-[13px] border-y-0 border-[#888] text-right text-[11px] leading-[13px] text-[#444]">=[Page] &amp; "/" &amp; [Pages] &amp; " ページ"</Field>
        </Section>
        <Section title="レポート フッター" height={23} steps={3}>
          <Field className="left-[1px] top-[7px] w-[75px] h-[15px] border-t-2 border-[#a6a6a6] pl-[3px] bg-white text-[11px] leading-[12px] text-[#333]">=Count(*)</Field>
          <div className="absolute left-[78px] top-[10px] w-[328px] h-3 border border-dotted border-[#dadada]" />
          <div className="absolute left-0 bottom-0 w-full h-px bg-[#333]" />
        </Section>
        <div className="flex-1 min-h-0 flex">
          <div className="w-4 shrink-0 bg-white border-r-2 border-[#d6d6d6] pt-px pl-0.5 overflow-hidden">
            <div className="flex flex-col items-center text-[7px] font-semibold text-[#222]">
              {[1, 2, 3, 4, 5, 6].map(n => (
                <div key={n} className="h-[28px] shrink-0 flex flex-col items-center">
                  <span className="h-[7px] leading-[7px]">{n}</span>
                  <span className="h-[7px] flex items-center"><Dot /></span>
                  <span className="h-[7px] flex items-center"><i className="block w-1 h-px bg-[#222]" /></span>
                  <span className="h-[7px] flex items-center"><Dot /></span>
                </div>
              ))}
            </div>
          </div>
        </div>
      </div>
      <div className="w-[13px] shrink-0 flex flex-col items-center bg-[#f3f3f3] pt-1 pb-0.5">
        <svg width="7" height="5" viewBox="0 0 7 5" fill="#666" className="block"><path d="M3.5 0L7 5H0z" /></svg>
        <div className="mt-[3px] w-1.5 h-[224px] rounded-full bg-[#6e6e6e]" />
        <svg width="7" height="5" viewBox="0 0 7 5" fill="#666" className="block mt-auto"><path d="M3.5 5L7 0H0z" /></svg>
      </div>
    </div>
    <div className="h-3 shrink-0 flex items-center bg-[#f3f3f3] pl-[3px]">
      <svg width="5" height="7" viewBox="0 0 5 7" fill="#666" className="block"><path d="M0 3.5L5 0v7z" /></svg>
      <div className="ml-1 w-[548px] h-1.5 rounded-full bg-[#6e6e6e]" />
      <svg width="5" height="7" viewBox="0 0 5 7" fill="#666" className="block ml-auto mr-1"><path d="M5 3.5L0 0v7z" /></svg>
      <span className="w-[13px] h-full bg-[#c9c9cd]" />
    </div>
    <ContextMenu />
  </main>
);

/* ---------- Status bar ---------- */

const StatusBar = () => (
  <footer className="h-[17px] shrink-0 flex items-center justify-between pl-2 bg-[#f3f3f3] border-t border-[#d6d6d6] text-[9px] text-[#333]">
    <span>デザイン ビュー</span>
    <div className="h-full flex items-center">
      <span className="mr-3.5 text-[10px]">NumLock</span>
      <button type="button" aria-label="レポート ビュー" className="w-[30px] flex justify-center">
        <Svg w={12} h={12}><path d="M1.5 0.5h10v11h-10zM0 3.5h3M0 8.5h3M4.5 5.5h2v4h-2zM7.5 3.5h2v6h-2z" /></Svg>
      </button>
      <button type="button" aria-label="印刷プレビュー" className="w-[30px] flex justify-center">
        <Svg w={12} h={12}><path d="M4 11.5H1.5v-11h4l3 3V5M5.5 0.5v3h3M5.5 7.5h5v3h-5zM7 5.5h3v2M7 10v1.500h3V10" /></Svg>
      </button>
      <button type="button" aria-label="レイアウト ビュー" className="w-[30px] flex justify-center">
        <Svg w={12} h={12}><path d="M0.5 0.5h11v4h-11zM0.5 6.5h11v5h-11zM5.5 0v12M7 2.5h3M7 8.5h3M2 2.5h2M2 8.5h2" /></Svg>
      </button>
      <button type="button" aria-label="デザイン ビュー" className="w-[29px] h-full flex items-center justify-center bg-[#dcdcdc]">
        <Svg w={12} h={12}><path d="M0.5 1v10.500H9zM3 7.5v1.500h2M9.5 0.5h2v11h-2zM5 6l5-5" /></Svg>
      </button>
    </div>
  </footer>
);

const TaskbarEdge = () => (
  <div className="h-1.5 shrink-0 flex">
    <div className="w-[35px] bg-[#16282f]" />
    <div className="w-[216px] flex justify-end bg-[#f1f1f1] pr-1 pt-0.5"><div className="w-[52px] rounded-t bg-[#d9d9d9]" /></div>
    <div className="flex-1 bg-gradient-to-r from-[#454545] from-70% to-[#16282f]" />
  </div>
);

const App = () => (
  <div className="h-screen flex flex-col overflow-hidden bg-[#efefef] font-['Noto_Sans','Noto_Sans_CJK_JP',sans-serif] [font-feature-settings:'palt']" lang="ja">
    <TitleBar />
    <TabStrip />
    <Ribbon />
    <div className="flex-1 min-h-0 flex">
      <NavPane />
      <Designer />
    </div>
    <StatusBar />
    <TaskbarEdge />
  </div>
);

export default App;
